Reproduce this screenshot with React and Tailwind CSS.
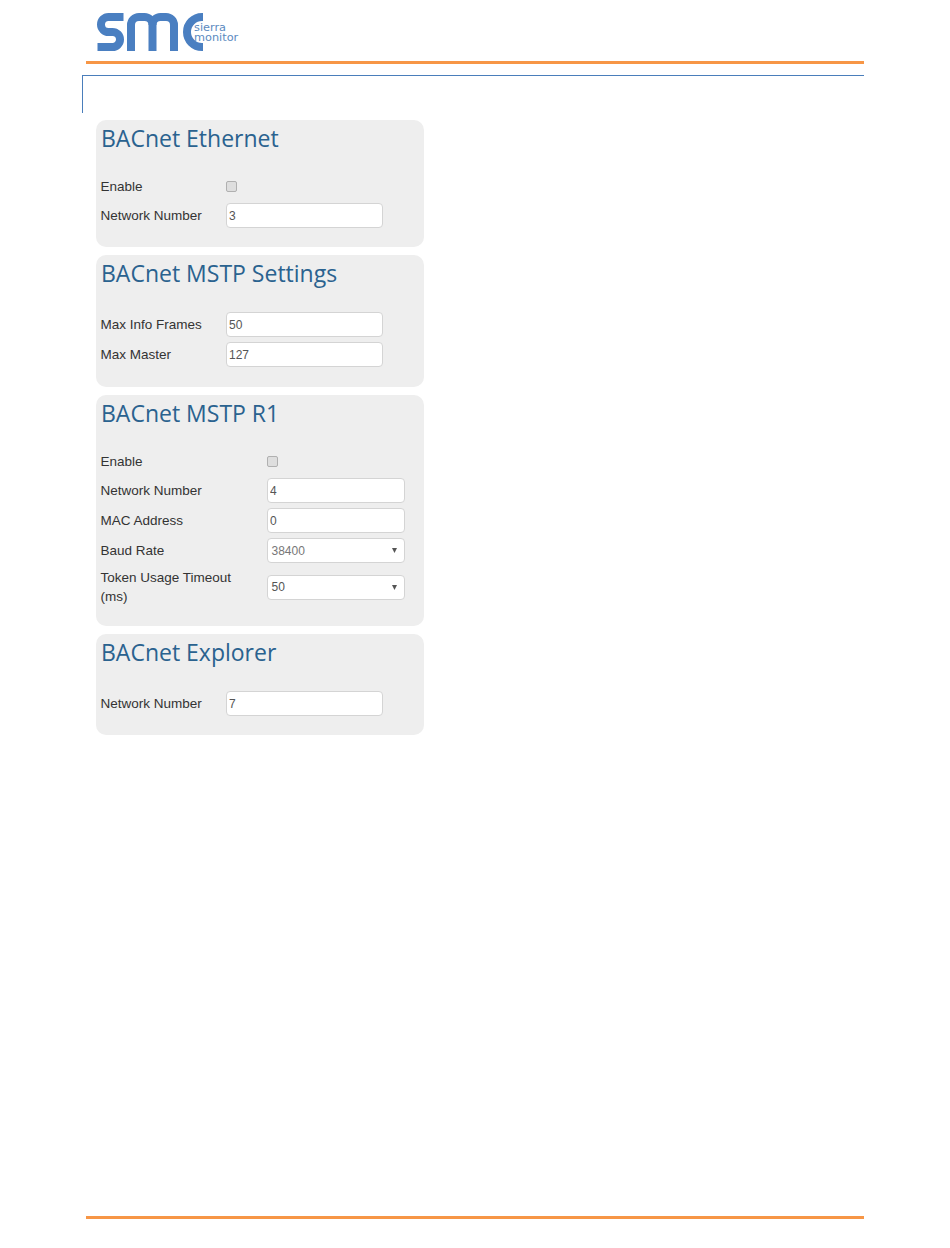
const labelFont = { fontFamily: '"Liberation Sans", Arial, sans-serif' };

function Logo() {
  return (
    <div className="relative w-[150px] h-[40px]">
      <svg width="110" height="40" viewBox="0 0 110 40" fill="none" stroke="#4a7fc1" strokeWidth="8">
        <path d="M27.500 5H12.500a7.500 7.500 0 0 0 0 15H16.500a7.500 7.500 0 0 1 0 15H1.500" />
        <path d="M35 39V13a8 8 0 0 1 8-8H48.500a8 8 0 0 1 8 8V39" />
        <path d="M56.500 13a8 8 0 0 1 8-8H70a8 8 0 0 1 8 8V39" />
        <path d="M107 5H106a15 15 0 0 0 0 30H107" />
      </svg>
      <div className="absolute left-[98px] top-[11px] text-[#5b8ac0] text-[11.300px] leading-[10px] font-['DejaVu_Sans',sans-serif]">
        <div>sierra</div>
        <div>monitor</div>
      </div>
    </div>
  );
}

function Label({ children }) {
  return <div className="text-[13.500px] leading-[19px] text-[#333]">{children}</div>;
}

function Checkbox() {
  return <div className="w-[11px] h-[11px] rounded-[2px] border border-[#b0b0b0] bg-[#dedede]" />;
}

function CheckRow({ label, col }) {
  return (
    <div className="flex items-center h-[18px] mb-[8px]">
      <div className={col}><Label>{label}</Label></div>
      <Checkbox />
    </div>
  );
}

function TextRow({ label, value, col, width }) {
  return (
    <div className="flex items-center mb-[5px]">
      <div className={col}><Label>{label}</Label></div>
      <input
        readOnly
        value={value}
        className={`${width} h-[25px] px-[2px] bg-white border border-[#d4d4d4] rounded-[4px] text-[12px] text-[#555] outline-none`}
      />
    </div>
  );
}

function SelectRow({ label, value, color }) {
  return (
    <div className="flex items-center mb-[5px]">
      <div className="w-[166.500px] pr-[20px]"><Label>{label}</Label></div>
      <div className="relative w-[138px] h-[25px] bg-white border border-[#d4d4d4] rounded-[4px] flex items-center pl-[3.500px]">
        <span className={`text-[12px] ${color}`}>{value}</span>
        <svg className="absolute right-[7px] top-[9px]" width="5" height="5" viewBox="0 0 5 5">
          <path d="M0 0H5L2.500 5Z" fill="#555" />
        </svg>
      </div>
    </div>
  );
}

function Card({ title, children, pb }) {
  return (
    <section className={`relative w-[328px] rounded-[10px] bg-[#eeeeee] pl-[4.500px] pt-[57px] ${pb}`} style={labelFont}>
      <h2 className="absolute left-[5px] top-[3px] text-[23px] leading-[30px] text-[#2a628f] font-['Open_Sans',sans-serif]">{title}</h2>
      {children}
    </section>
  );
}

export default function App() {
  const narrow = 'w-[125.500px]';
  const wide = 'w-[166.500px]';
  return (
    <div className="w-[950px] h-[1248px] bg-white flex flex-col">
      <header className="pl-[96px] pt-[12px] h-[61px]">
        <Logo />
      </header>
      <div className="ml-[86px] w-[778px] h-[3px] bg-[#f79646]" />
      <div className="ml-[82px] mt-[11px] w-[782px] h-[38px] border-t border-l border-[#4a7ebb]" />
      <main className="ml-[96px] mt-[7px] flex flex-col gap-[8px]">
        <Card title="BACnet Ethernet" pb="pb-[14px]">
          <CheckRow label="Enable" col={narrow} />
          <TextRow label="Network Number" value="3" col={narrow} width="w-[157px]" />
        </Card>
        <Card title="BACnet MSTP Settings" pb="pb-[15px]">
          <TextRow label="Max Info Frames" value="50" col={narrow} width="w-[157px]" />
          <TextRow label="Max Master" value="127" col={narrow} width="w-[157px]" />
        </Card>
        <Card title="BACnet MSTP R1" pb="pb-[15px]">
          <CheckRow label="Enable" col={wide} />
          <TextRow label="Network Number" value="4" col={wide} width="w-[138px]" />
          <TextRow label="MAC Address" value="0" col={wide} width="w-[138px]" />
          <SelectRow label="Baud Rate" value="38400" color="text-[#777]" />
          <SelectRow label="Token Usage Timeout (ms)" value="50" color="text-[#555]" />
        </Card>
        <Card title="BACnet Explorer" pb="pb-[14px]">
          <TextRow label="Network Number" value="7" col={narrow} width="w-[157px]" />
        </Card>
      </main>
      <div className="mt-auto mb-[29px] ml-[86px] w-[778px] h-[3px] bg-[#f79646]" />
    </div>
  );
}
